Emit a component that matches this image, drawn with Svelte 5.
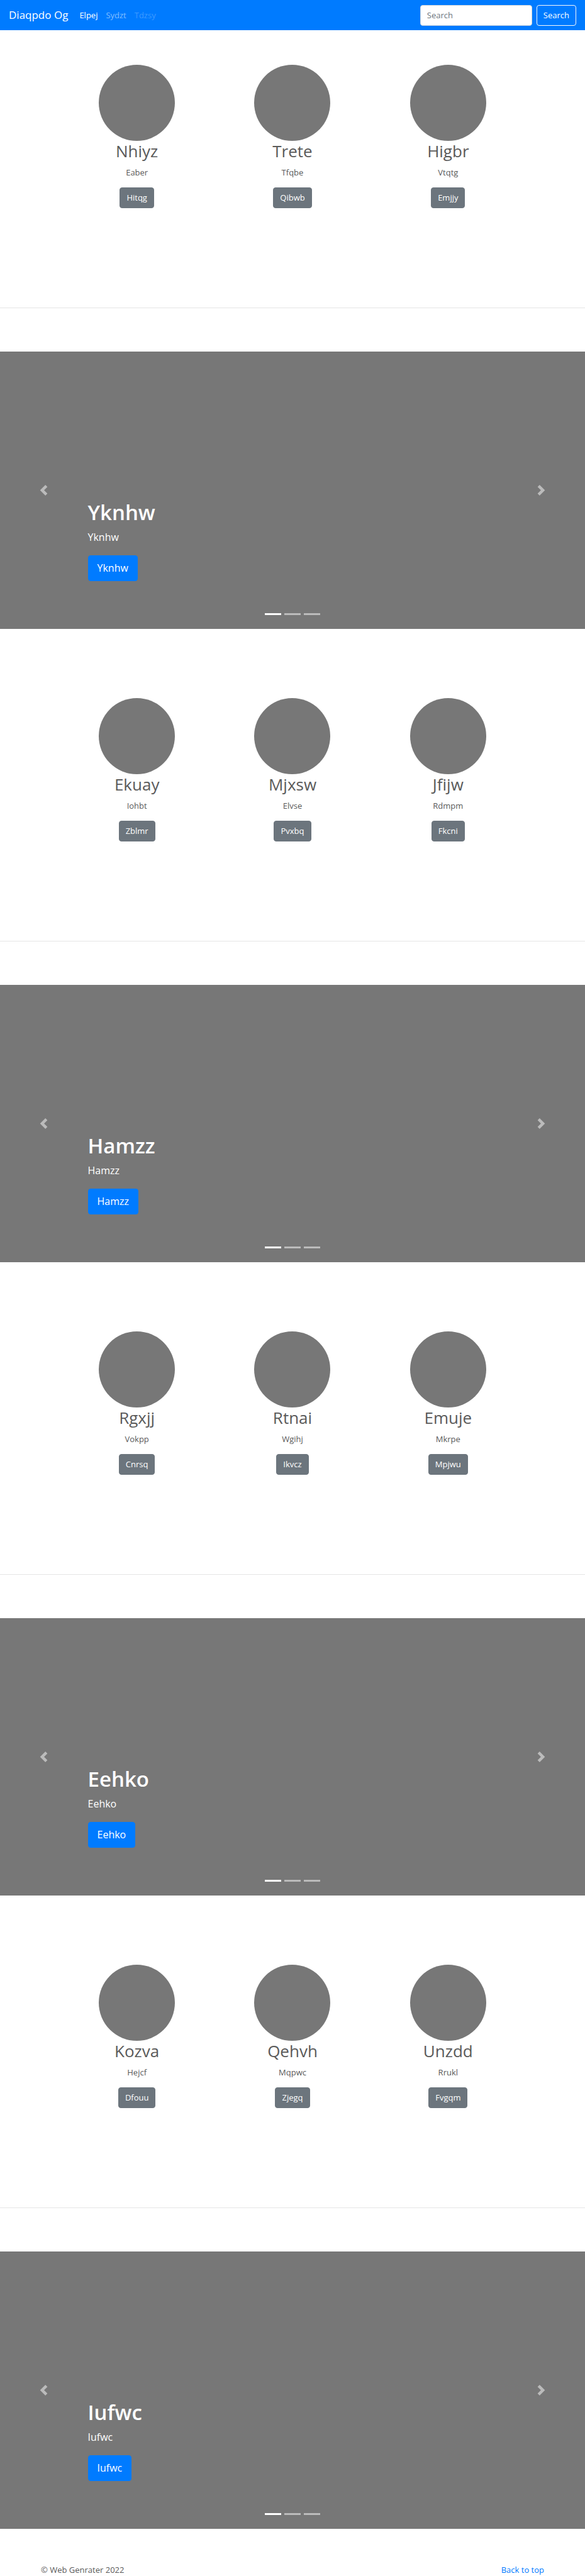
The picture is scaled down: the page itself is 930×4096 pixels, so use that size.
<script>
  const sections = [
    {
      slide: 'Yknhw',
      cards: [
        { title: 'Nhiyz', text: 'Eaber', action: 'Hitqg' },
        { title: 'Trete', text: 'Tfqbe', action: 'Qibwb' },
        { title: 'Higbr', text: 'Vtqtg', action: 'Emjjy' }
      ]
    },
    {
      slide: 'Hamzz',
      cards: [
        { title: 'Ekuay', text: 'Iohbt', action: 'Zblmr' },
        { title: 'Mjxsw', text: 'Elvse', action: 'Pvxbq' },
        { title: 'Jfijw', text: 'Rdmpm', action: 'Fkcni' }
      ]
    },
    {
      slide: 'Eehko',
      cards: [
        { title: 'Rgxjj', text: 'Vokpp', action: 'Cnrsq' },
        { title: 'Rtnai', text: 'Wgihj', action: 'Ikvcz' },
        { title: 'Emuje', text: 'Mkrpe', action: 'Mpjwu' }
      ]
    },
    {
      slide: 'Iufwc',
      cards: [
        { title: 'Kozva', text: 'Hejcf', action: 'Dfouu' },
        { title: 'Qehvh', text: 'Mqpwc', action: 'Zjegq' },
        { title: 'Unzdd', text: 'Rrukl', action: 'Fvgqm' }
      ]
    }
  ];
</script>

<header class="navbar">
  <a class="brand" href="#top">Diaqpdo Og</a>
  <nav class="links">
    <a class="active" href="#top">Elpej</a>
    <a href="#top">Sydzt</a>
    <a class="disabled" href="#top" aria-disabled="true">Tdzsy</a>
  </nav>
  <form class="search" role="search">
    <input type="search" placeholder="Search" aria-label="Search" />
    <button type="button" class="btn outline">Search</button>
  </form>
</header>

<main>
  {#each sections as section}
    <section class="cards">
      {#each section.cards as card}
        <article class="card">
          <div class="avatar"></div>
          <h2>{card.title}</h2>
          <p>{card.text}</p>
          <a class="btn secondary" href="#top">{card.action}</a>
        </article>
      {/each}
    </section>
    <hr />
    <section class="carousel">
      <button type="button" class="control" aria-label="Previous">
        <svg viewBox="0 0 8 8" aria-hidden="true"><path d="M5.25 0l-4 4 4 4 1.5-1.5-2.5-2.5 2.5-2.5-1.5-1.5z" /></svg>
      </button>
      <div class="slide">
        <div class="caption">
          <h1>{section.slide}</h1>
          <p>{section.slide}</p>
          <a class="btn primary" href="#top">{section.slide}</a>
        </div>
        <div class="indicators">
          <button type="button" class="current" aria-label="Slide 1"></button>
          <button type="button" aria-label="Slide 2"></button>
          <button type="button" aria-label="Slide 3"></button>
        </div>
      </div>
      <button type="button" class="control" aria-label="Next">
        <svg viewBox="0 0 8 8" aria-hidden="true"><path d="M2.75 0l-1.5 1.5 2.5 2.5-2.5 2.5 1.5 1.5 4-4-4-4z" /></svg>
      </button>
    </section>
  {/each}
</main>

<footer>
  <span>© Web Genrater 2022</span>
  <a href="#top">Back to top</a>
</footer>

<style>
  :global(body) {
    margin: 0;
    background: #fff;
    color: #5a5a5a;
    font: 13px/20px "Segoe UI", "Open Sans", "Noto Sans", sans-serif;
  }

  :global(*) {
    box-sizing: border-box;
  }

  a {
    color: #007bff;
    text-decoration: none;
  }

  h1,
  h2,
  p {
    margin: 0;
  }

  button,
  input {
    font: inherit;
  }

  .navbar {
    display: flex;
    align-items: center;
    height: 48px;
    padding: 0 14px;
    background: #007bff;
  }

  .brand {
    margin-right: 18px;
    color: #fff;
    font-size: 17px;
    line-height: 26px;
  }

  .links {
    display: flex;
    flex: 1;
    gap: 13px;
  }

  .links a {
    color: rgba(255, 255, 255, 0.5);
  }

  .links .active {
    color: #fff;
  }

  .links .disabled {
    color: rgba(255, 255, 255, 0.25);
  }

  .search {
    display: flex;
    gap: 7px;
  }

  .search input {
    width: 178px;
    height: 33px;
    padding: 0 10px;
    border: 1px solid #ced4da;
    border-radius: 4px;
    background: #fff;
    color: #495057;
    appearance: none;
  }

  .search input::placeholder {
    color: #6c757d;
    opacity: 1;
  }

  .btn {
    display: inline-block;
    padding: 5px 10px;
    border: 1px solid transparent;
    border-radius: 4px;
    color: #fff;
    line-height: 21px;
  }

  .outline {
    border-color: #f8f9fa;
    background: transparent;
  }

  .secondary {
    border-color: #6c757d;
    background: #6c757d;
  }

  .cards {
    display: grid;
    grid-template-columns: repeat(3, 1fr);
    padding: 110px 94px 158px;
  }

  .cards:first-child {
    padding-top: 55px;
  }

  .card {
    display: flex;
    flex-direction: column;
    align-items: center;
  }

  .avatar {
    width: 121px;
    height: 121px;
    border-radius: 50%;
    background: #777;
  }

  .card h2 {
    margin-bottom: 7px;
    font-size: 26px;
    font-weight: 400;
    line-height: 33px;
  }

  .card p {
    margin-bottom: 14px;
  }

  hr {
    height: 1px;
    margin: 0 0 69px;
    border: 0;
    background: #e5e5e5;
  }

  .carousel {
    display: grid;
    grid-template-columns: 15% 1fr 15%;
    height: 441px;
    background: #777;
    color: #fff;
  }

  .control {
    display: flex;
    align-items: center;
    justify-content: center;
    padding: 0;
    border: 0;
    background: none;
    opacity: 0.5;
  }

  .control svg {
    width: 17px;
    height: 17px;
    fill: #fff;
  }

  .slide {
    display: flex;
    flex-direction: column;
    justify-content: flex-end;
    gap: 51px;
    padding-bottom: 22px;
  }

  .caption h1 {
    margin-bottom: 6px;
    font-size: 33px;
    font-weight: 600;
    line-height: 41px;
  }

  .caption p {
    margin-bottom: 16px;
    font-size: 16px;
    line-height: 26px;
  }

  .primary {
    display: inline-block;
    padding: 7px 14px;
    border-color: #007bff;
    background: #007bff;
    font-size: 16px;
    line-height: 25px;
    vertical-align: top;
  }

  .indicators {
    display: flex;
    justify-content: center;
    gap: 5px;
  }

  .indicators button {
    width: 26px;
    height: 3px;
    padding: 0;
    border: 0;
    background: #fff;
    opacity: 0.5;
  }

  .indicators .current {
    opacity: 1;
  }

  footer {
    display: flex;
    justify-content: space-between;
    padding: 55px 65px 0;
  }
</style>
